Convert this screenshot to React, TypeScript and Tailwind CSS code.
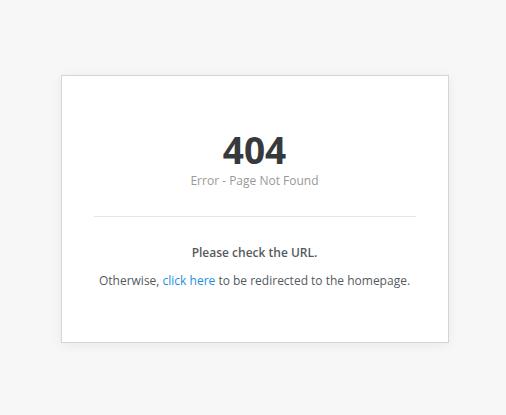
export default function App() {
  return (
    <div className="flex h-[415px] w-full items-center justify-center bg-[#f7f7f7]" style={{ fontFamily: '"Open Sans", sans-serif' }}>
      <div className="w-[388px] h-[268px] border border-[#d5d5d5] bg-white shadow-[0_2px_12px_rgba(0,0,0,0.06)] px-[32px] pt-[52px] ml-[3px] mt-[2px]">
        <div className="text-center">
          <div className="text-[37px] font-bold leading-[44px] text-[#373a3c]">404</div>
          <div className="mt-[1px] text-[12px] leading-[16px] text-[#999]">Error - Page Not Found</div>
        </div>
        <div className="mt-[27px] h-px bg-[#e5e5e5]" />
        <div className="mt-[28px] text-center text-[12px] font-semibold text-[#555a5f] leading-[16px]">Please check the URL.</div>
        <div className="mt-[12px] text-center text-[12px] text-[#555a5f] leading-[16px]">
          Otherwise, <a className="text-[#1a8fe6]">click here</a> to be redirected to the homepage.
        </div>
      </div>
    </div>
  );
}
